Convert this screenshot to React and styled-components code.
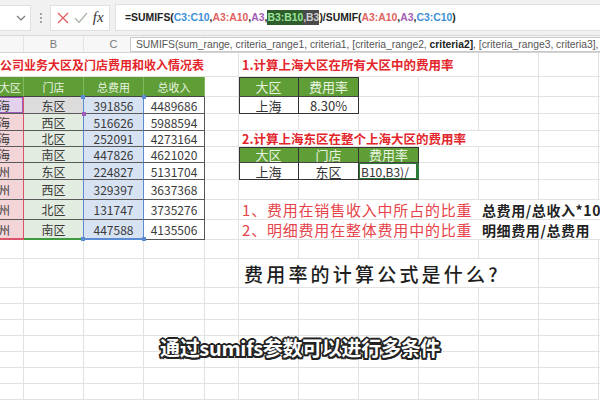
import React from 'react';
import styled, { createGlobalStyle } from 'styled-components';

const FONT = `"Noto Sans CJK SC", "Liberation Sans", sans-serif`;
const GRID = '#e2e2e2';
const GREEN = '#5f9e36';
const COLS = '50px 60px 60px 61px 34px 60px 60px 60px 60px 60px 60px 60px';
const ROWS = '24px 20px 17px 17px 16px 16px 17px 20px 20px 20px 19px 29px 16px 16px 16px 16px 16px 16px 16px';

const GlobalStyle = createGlobalStyle`
  html, body { margin: 0; padding: 0; }
  body {
    width: 600px;
    height: 400px;
    overflow: hidden;
    background: #fff;
    font-family: ${FONT};
  }
`;

const leftRows = [
  { region: '上海', store: '东区', cost: '391856', income: '4489686' },
  { region: '上海', store: '西区', cost: '516626', income: '5988594' },
  { region: '上海', store: '北区', cost: '252091', income: '4273164' },
  { region: '上海', store: '南区', cost: '447826', income: '4621020' },
  { region: '广州', store: '东区', cost: '224827', income: '5131704' },
  { region: '广州', store: '西区', cost: '329397', income: '3637368' },
  { region: '广州', store: '北区', cost: '131747', income: '3735276' },
  { region: '广州', store: '南区', cost: '447588', income: '4135506' },
];

// colours of the reference ranges drawn on the left table
const tones = {
  region: { fill: '#f3d5d8', right: '#d9546a', first: '#e4d2ec', firstLine: '#9c5cb8' },
  store: { fill: '#e3ece0', right: '#5b8bd3', first: '#dcdcdc', firstLine: '#5b8bd3' },
  cost: { fill: '#d7e2f3', right: '#5b8bd3', first: '#d7e2f3', firstLine: '#5b8bd3' },
  income: { fill: '#ffffff', right: '#555', first: '#ffffff', firstLine: '#555' },
};

const lastBottom = {
  region: '2px solid #d9546a',
  store: '2px solid #3f9b3f',
  cost: '2px solid #5b8bd3',
  income: '1px solid #555',
};

const blanks = (n, key) =>
  Array.from({ length: n }, (_, i) => <GridCell key={`${key}-${i}`} />);

const App = () => {
  const rightSide = [
    [
      <BoxCell key="a" $edge>上海</BoxCell>,
      <BoxCell key="b">8.30%</BoxCell>,
      ...blanks(5, 'r0'),
    ],
    blanks(7, 'r1'),
    [
      <TitleCell key="t" $span={4}>2.计算上海东区在整个上海大区的费用率</TitleCell>,
      ...blanks(3, 'r2'),
    ],
    [
      <HeaderCell key="a" $big $edge>大区</HeaderCell>,
      <HeaderCell key="b" $big>门店</HeaderCell>,
      <HeaderCell key="c" $big>费用率</HeaderCell>,
      ...blanks(4, 'r3'),
    ],
    [
      <BoxCell key="a" $edge>上海</BoxCell>,
      <BoxCell key="b">东区</BoxCell>,
      <ActiveCell key="c">B10,B3)/</ActiveCell>,
      ...blanks(4, 'r4'),
    ],
    blanks(7, 'r5'),
    [
      <NoteCell key="a" $span={4}>1、费用在销售收入中所占的比重</NoteCell>,
      <RuleCell key="b" $span={3}>总费用/总收入*100%</RuleCell>,
    ],
    [
      <NoteCell key="a" $span={4}>2、明细费用在整体费用中的比重</NoteCell>,
      <RuleCell key="b" $span={3}>明细费用/总费用</RuleCell>,
    ],
  ];

  return (
    <Screen>
      <GlobalStyle />

      {/* formula bar */}
      <FormulaBar>
        <NameBox>
          <svg width="10" height="6" viewBox="0 0 10 6">
            <path d="M1 1 L5 5 L9 1" fill="none" stroke="#777" strokeWidth="1.2" />
          </svg>
        </NameBox>
        <Dots>
          <span />
          <span />
          <span />
        </Dots>
        <FxGroup>
          <svg width="12" height="12" viewBox="0 0 12 12">
            <path d="M1 1 L11 11 M11 1 L1 11" stroke="#e25c5c" strokeWidth="1.3" />
          </svg>
          <svg width="14" height="12" viewBox="0 0 14 12">
            <path d="M1 6 L5 10.5 L13 1" fill="none" stroke="#a9b7a9" strokeWidth="1.3" />
          </svg>
          <Fx>fx</Fx>
        </FxGroup>
        <FormulaInput>
          <Part>=SUMIFS(</Part>
          <Part $c="#3d8fd6">C3:C10</Part>
          <Part>,</Part>
          <Part $c="#e06262">A3:A10</Part>
          <Part>,</Part>
          <Part $c="#a35db5">A3</Part>
          <Part>,</Part>
          <Part $c="#9be39b" $bg="#2f5e2c">B3:B10</Part>
          <Part $c="#cfcfcf" $bg="#4a4a4a">,B3</Part>
          <Part>)/SUMIF(</Part>
          <Part $c="#e06262">A3:A10</Part>
          <Part>,</Part>
          <Part $c="#a35db5">A3</Part>
          <Part>,</Part>
          <Part $c="#3d8fd6">C3:C10</Part>
          <Part>)</Part>
        </FormulaInput>
      </FormulaBar>

      {/* column letters (the rest sit under the tooltip) */}
      <ColumnHeaders>
        <ColLetter />
        <ColLetter>B</ColLetter>
        <ColLetter>C</ColLetter>
        <ColLetter />
        <ColLetter />
        <ColLetter />
        <ColLetter />
        <ColLetter />
        <ColLetter />
        <ColLetter />
        <ColLetter />
        <ColLetter />
      </ColumnHeaders>

      <Tooltip>
        SUMIFS(sum_range, criteria_range1, criteria1, [criteria_range2, <b>criteria2]</b>, [criteria_range3, criteria3], ...)
      </Tooltip>

      {/* sheet */}
      <Sheet>
        <TitleCell $span={4} $indent>公司业务大区及门店费用和收入情况表</TitleCell>
        <GridCell />
        <TitleCell $span={3}>1.计算上海大区在所有大区中的费用率</TitleCell>
        {blanks(4, 'r-1')}

        <HeaderCell $soft $right>大区</HeaderCell>
        <HeaderCell $soft>门店</HeaderCell>
        <HeaderCell $soft>总费用</HeaderCell>
        <HeaderCell $soft>总收入</HeaderCell>
        <GridCell />
        <HeaderCell $big $edge>大区</HeaderCell>
        <HeaderCell $big>费用率</HeaderCell>
        {blanks(5, 'r-2')}

        {leftRows.map((row, i) => {
          const first = i === 0;
          const last = i === leftRows.length - 1;
          return (
            <React.Fragment key={i}>
              <DataCell $tone="region" $first={first} $last={last}>
                {row.region}
              </DataCell>
              <DataCell $tone="store" $first={first} $last={last}>
                {row.store}
                {first && <Handle $c="#9c5cb8" $pos="br" />}
              </DataCell>
              <DataCell $tone="cost" $first={first} $last={last}>
                {row.cost}
                {first && <Handle $c="#5b8bd3" $pos="tl" />}
                {first && <Handle $c="#5b8bd3" $pos="tr" />}
                {last && <Handle $c="#5b8bd3" $pos="bl" />}
                {last && <Handle $c="#5b8bd3" $pos="br" />}
              </DataCell>
              <DataCell $tone="income" $first={first} $last={last}>
                {row.income}
              </DataCell>
              <GridCell />
              {rightSide[i]}
            </React.Fragment>
          );
        })}

        {blanks(12, 'r-11')}
        {blanks(5, 'r-12')}
        <QuestionCell $span={5}>费用率的计算公式是什么?</QuestionCell>
        <GridCell />
        {blanks(84, 'r-rest')}
      </Sheet>

      <Caption>通过sumifs参数可以进行多条件</Caption>
    </Screen>
  );
};

const Screen = styled.div`
  position: relative;
  width: 600px;
  height: 400px;
  overflow: hidden;
  display: flex;
  flex-direction: column;
  background: #fff;
`;

const FormulaBar = styled.div`
  flex: none;
  height: 36px;
  box-sizing: border-box;
  display: flex;
  align-items: center;
  background: #f1f1f1;
  border-bottom: 1px solid #d8d8d8;
`;

const NameBox = styled.div`
  width: 31px;
  height: 26px;
  box-sizing: border-box;
  background: #fff;
  border: 1px solid #e0e0e0;
  border-left: none;
  display: flex;
  align-items: center;
  justify-content: flex-end;
  padding-right: 4px;
`;

const Dots = styled.div`
  width: 19px;
  display: flex;
  flex-direction: column;
  align-items: center;
  gap: 2px;

  span {
    width: 2px;
    height: 2px;
    border-radius: 1px;
    background: #888;
  }
`;

const FxGroup = styled.div`
  width: 60px;
  height: 26px;
  box-sizing: border-box;
  background: #fff;
  border: 1px solid #e0e0e0;
  display: flex;
  align-items: center;
  justify-content: space-around;
  padding: 0 3px 0 4px;
`;

const Fx = styled.span`
  font-family: "Liberation Serif", serif;
  font-style: italic;
  font-size: 15px;
  color: #333;
  line-height: 1;
`;

const FormulaInput = styled.div`
  flex: 1;
  margin-left: 5px;
  height: 27px;
  box-sizing: border-box;
  background: #fff;
  border: 1px solid #e0e0e0;
  border-right: none;
  display: flex;
  align-items: center;
  padding-left: 9px;
  font-family: "Liberation Sans", sans-serif;
  font-weight: 700;
  font-size: 10.4px;
  white-space: nowrap;
  overflow: hidden;
`;

const Part = styled.span`
  color: ${(p) => p.$c || '#222'};
  background: ${(p) => p.$bg || 'transparent'};
  line-height: 15px;
`;

const ColumnHeaders = styled.div`
  flex: none;
  height: 17px;
  margin-left: -26px;
  display: grid;
  grid-template-columns: ${COLS};
  background: #f7f7f7;
  border-bottom: 1px solid #d4d4d4;
  box-sizing: border-box;
`;

const ColLetter = styled.div`
  display: flex;
  align-items: center;
  justify-content: center;
  border-right: 1px solid #e4e4e4;
  font-family: "Liberation Sans", sans-serif;
  font-size: 11px;
  color: #777;
`;

const Tooltip = styled.div`
  position: absolute;
  top: 37px;
  left: 130px;
  width: 480px;
  height: 15px;
  box-sizing: border-box;
  background: #fff;
  border: 1px solid #c9c9c9;
  padding-left: 5px;
  font-family: "Liberation Sans", sans-serif;
  font-size: 10.3px;
  line-height: 13px;
  color: #555;
  white-space: nowrap;
  overflow: hidden;

  b {
    color: #222;
  }
`;

const Sheet = styled.div`
  flex: none;
  margin-left: -26px;
  display: grid;
  grid-template-columns: ${COLS};
  grid-template-rows: ${ROWS};
`;

const GridCell = styled.div`
  grid-column: span ${(p) => p.$span || 1};
  position: relative;
  box-sizing: border-box;
  min-width: 0;
  display: flex;
  align-items: center;
  justify-content: center;
  border-right: 1px solid ${GRID};
  border-bottom: 1px solid ${GRID};
  white-space: nowrap;
  font-family: ${FONT};
  font-size: 12px;
  color: #333;
`;

const TitleCell = styled(GridCell)`
  justify-content: flex-start;
  padding-left: ${(p) => (p.$indent ? '26px' : '3px')};
  border-right-color: transparent;
  font-size: ${(p) => (p.$indent ? '12px' : '12.5px')};
  font-weight: 700;
  color: #e3262b;
  align-items: ${(p) => (p.$indent ? 'flex-end' : 'center')};
  padding-bottom: ${(p) => (p.$indent ? '3px' : '0')};
`;

const HeaderCell = styled(GridCell)`
  background: ${GREEN};
  color: #e9f3e0;
  font-size: ${(p) => (p.$big ? '13px' : '11px')};
  justify-content: ${(p) => (p.$right ? 'flex-end' : 'center')};
  padding-right: ${(p) => (p.$right ? '2px' : '0')};
  border-right-color: ${(p) => (p.$soft ? '#82b85e' : '#333')};
  border-bottom-color: #444;
  box-shadow: ${(p) =>
    p.$big ? `inset 0 1px 0 #333${p.$edge ? ', inset 1px 0 0 #333' : ''}` : 'none'};
`;

const DataCell = styled(GridCell)`
  background: ${(p) => (p.$first ? tones[p.$tone].first : tones[p.$tone].fill)};
  border-right: 1px solid ${(p) => tones[p.$tone].right};
  border-bottom: ${(p) => (p.$last ? lastBottom[p.$tone] : '1px solid #5a5a5a')};
  box-shadow: ${(p) =>
    p.$first && p.$tone === 'region' ? `inset 0 0 0 1px ${tones.region.firstLine}` : 'none'};
  justify-content: ${(p) => (p.$tone === 'region' ? 'flex-end' : 'center')};
  padding-right: ${(p) => (p.$tone === 'region' ? '13px' : '0')};
  color: #3a3a3a;
`;

const Handle = styled.span`
  position: absolute;
  width: 4px;
  height: 4px;
  background: ${(p) => p.$c};
  top: ${(p) => (p.$pos[0] === 't' ? '-2px' : 'auto')};
  bottom: ${(p) => (p.$pos[0] === 'b' ? '-3px' : 'auto')};
  left: ${(p) => (p.$pos[1] === 'l' ? '-3px' : 'auto')};
  right: ${(p) => (p.$pos[1] === 'r' ? '-3px' : 'auto')};
  z-index: 2;
`;

const BoxCell = styled(GridCell)`
  font-size: 13px;
  color: #333;
  border-right-color: #333;
  border-bottom-color: #333;
  box-shadow: ${(p) => (p.$edge ? 'inset 1px 0 0 #333' : 'none')};
`;

const ActiveCell = styled(BoxCell)`
  justify-content: flex-start;
  padding-left: 2px;
  font-size: 12px;
  box-shadow: inset 0 0 0 1px #2f7a36;
  border-right: 2px solid #2f7a36;
`;

const NoteCell = styled(GridCell)`
  justify-content: flex-start;
  padding-left: 3px;
  border-right-color: transparent;
  font-size: 15px;
  letter-spacing: 0.8px;
  color: #e6444a;
`;

const RuleCell = styled(GridCell)`
  justify-content: flex-start;
  padding-left: 3px;
  font-size: 14px;
  font-weight: 700;
  letter-spacing: 0.6px;
  color: #222;
  overflow: hidden;
`;

const QuestionCell = styled(GridCell)`
  justify-content: flex-start;
  padding-left: 5px;
  font-size: 19px;
  font-weight: 500;
  letter-spacing: 3.2px;
  color: #1e1e1e;
`;

const Caption = styled.div`
  position: absolute;
  left: 0;
  right: 0;
  top: 333px;
  text-align: center;
  font-family: ${FONT};
  font-size: 20px;
  font-weight: 700;
  color: #fff;
  letter-spacing: -0.3px;
  text-shadow:
    -1.5px -1.5px 0 #222, 1.5px -1.5px 0 #222, -1.5px 1.5px 0 #222, 1.5px 1.5px 0 #222,
    0 -2px 0 #222, 0 2px 0 #222, -2px 0 0 #222, 2px 0 0 #222;
`;

export default App;
